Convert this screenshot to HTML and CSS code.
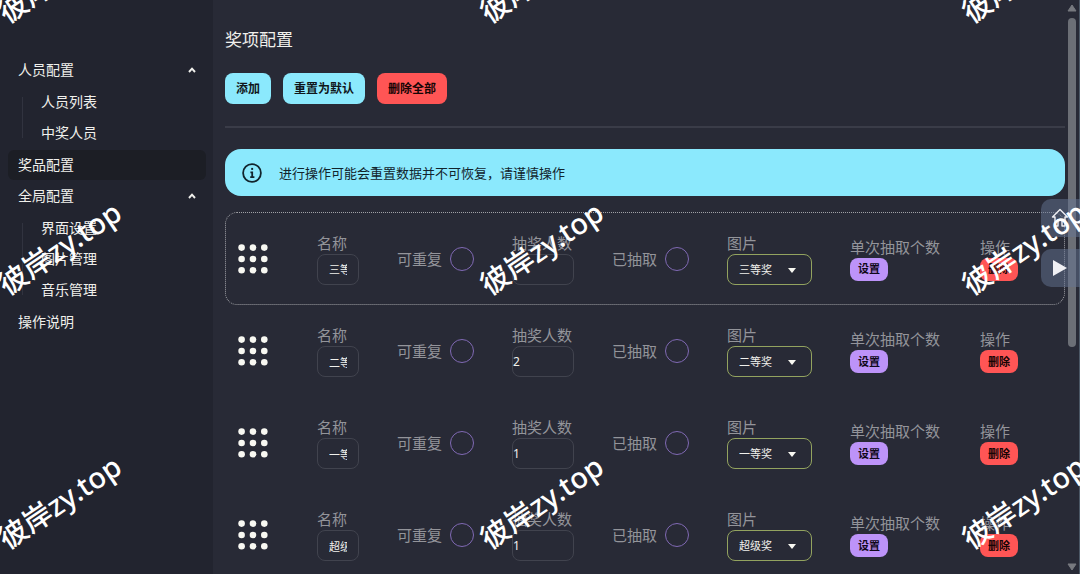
FILE: index.html
```html
<!DOCTYPE html>
<html lang="zh-CN">
<head>
<meta charset="utf-8">
<title>奖项配置</title>
<link rel="stylesheet" href="styles.css">
</head>
<body>
<svg class="defs" aria-hidden="true">
  <symbol id="grip" viewBox="0 0 30 30">
    <circle cx="3.6" cy="3.6" r="3.3"/><circle cx="15" cy="3.6" r="3.3"/><circle cx="26.3" cy="3.6" r="3.3"/>
    <circle cx="3.6" cy="15" r="3.3"/><circle cx="15" cy="15" r="3.3"/><circle cx="26.3" cy="15" r="3.3"/>
    <circle cx="3.6" cy="26.3" r="3.3"/><circle cx="15" cy="26.3" r="3.3"/><circle cx="26.3" cy="26.3" r="3.3"/>
  </symbol>
  <symbol id="chevron" viewBox="0 0 8 6"><path d="M1 5 4 1.6 7 5" fill="none" stroke="currentColor" stroke-width="1.9"/></symbol>
</svg>
<div class="app">
  <nav class="sidebar">
    <ul class="menu">
      <li class="group">
        <button class="item" type="button">人员配置<svg class="chevron"><use href="#chevron"/></svg></button>
        <ul class="submenu">
          <li><a class="item" href="#persons">人员列表</a></li>
          <li><a class="item" href="#winners">中奖人员</a></li>
        </ul>
      </li>
      <li><a class="item active" href="#prizes">奖品配置</a></li>
      <li class="group">
        <button class="item" type="button">全局配置<svg class="chevron"><use href="#chevron"/></svg></button>
        <ul class="submenu">
          <li><a class="item" href="#face">界面设置</a></li>
          <li><a class="item" href="#images">图片管理</a></li>
          <li><a class="item" href="#music">音乐管理</a></li>
        </ul>
      </li>
      <li><a class="item" href="#readme">操作说明</a></li>
    </ul>
  </nav>

  <main class="main">
    <h1 class="title">奖项配置</h1>
    <div class="actions">
      <button class="btn info" type="button">添加</button>
      <button class="btn info" type="button">重置为默认</button>
      <button class="btn error" type="button">删除全部</button>
    </div>
    <hr class="divider">
    <div class="alert" role="alert">
      <svg class="alert-icon" viewBox="0 0 20 20" fill="none" stroke="currentColor" stroke-width="1.8">
        <circle cx="10" cy="10" r="8.9"/>
        <path d="M8.4 9.3h1.8v4.8M8.2 14.1h4.2"/><path d="M9.2 5.9h1.9" stroke-width="2"/>
      </svg>
      <span>进行操作可能会重置数据并不可恢复，请谨慎操作</span>
    </div>

    <ul class="prizes">
      <li class="prize selected">
        <svg class="grip"><use href="#grip"/></svg>
        <label class="field name">名称<input class="input" type="text" value="三等奖"></label>
        <label class="check">可重复<input type="checkbox"></label>
        <label class="field count">抽奖人数<input class="input" type="text" value=""></label>
        <label class="check">已抽取<input type="checkbox"></label>
        <label class="field image">图片<select class="select"><option>三等奖</option></select></label>
        <div class="field single"><span>单次抽取个数</span><button class="btn small accent" type="button">设置</button></div>
        <div class="field"><span>操作</span><button class="btn small error" type="button">删除</button></div>
      </li>
      <li class="prize">
        <svg class="grip"><use href="#grip"/></svg>
        <label class="field name">名称<input class="input" type="text" value="二等奖"></label>
        <label class="check">可重复<input type="checkbox"></label>
        <label class="field count">抽奖人数<input class="input" type="text" value="2"></label>
        <label class="check">已抽取<input type="checkbox"></label>
        <label class="field image">图片<select class="select"><option>二等奖</option></select></label>
        <div class="field single"><span>单次抽取个数</span><button class="btn small accent" type="button">设置</button></div>
        <div class="field"><span>操作</span><button class="btn small error" type="button">删除</button></div>
      </li>
      <li class="prize">
        <svg class="grip"><use href="#grip"/></svg>
        <label class="field name">名称<input class="input" type="text" value="一等奖"></label>
        <label class="check">可重复<input type="checkbox"></label>
        <label class="field count">抽奖人数<input class="input" type="text" value="1"></label>
        <label class="check">已抽取<input type="checkbox"></label>
        <label class="field image">图片<select class="select"><option>一等奖</option></select></label>
        <div class="field single"><span>单次抽取个数</span><button class="btn small accent" type="button">设置</button></div>
        <div class="field"><span>操作</span><button class="btn small error" type="button">删除</button></div>
      </li>
      <li class="prize">
        <svg class="grip"><use href="#grip"/></svg>
        <label class="field name">名称<input class="input" type="text" value="超级奖"></label>
        <label class="check">可重复<input type="checkbox"></label>
        <label class="field count">抽奖人数<input class="input" type="text" value="1"></label>
        <label class="check">已抽取<input type="checkbox"></label>
        <label class="field image">图片<select class="select"><option>超级奖</option></select></label>
        <div class="field single"><span>单次抽取个数</span><button class="btn small accent" type="button">设置</button></div>
        <div class="field"><span>操作</span><button class="btn small error" type="button">删除</button></div>
      </li>
    </ul>
  </main>

  <div class="scrollbar" aria-hidden="true">
    <svg class="arrow" viewBox="0 0 10 8"><path d="M5 1 9 7H1z" stroke-linejoin="round"/></svg>
    <div class="track"><div class="thumb"></div></div>
    <svg class="arrow" viewBox="0 0 10 8"><path d="M5 7 9 1H1z" stroke-linejoin="round"/></svg>
  </div>

  <div class="dock">
    <button class="dock-btn" type="button" aria-label="首页">
      <svg viewBox="0 0 20 20" width="20" height="20" fill="none" stroke="currentColor" stroke-width="1.4" stroke-linejoin="round"><path d="M2.5 9 10 1.5 17.500 9H15v9h-3v-6H8v6H5V9z"/></svg>
    </button>
    <button class="dock-btn" type="button" aria-label="播放">
      <svg viewBox="0 0 20 20" width="20" height="20" fill="currentColor"><path d="M3 2v16l14-8z"/></svg>
    </button>
  </div>

  <div class="marks" aria-hidden="true">
    <span>彼岸zy.top</span><span>彼岸zy.top</span><span>彼岸zy.top</span>
    <span>彼岸zy.top</span><span>彼岸zy.top</span><span>彼岸zy.top</span>
    <span>彼岸zy.top</span><span>彼岸zy.top</span><span>彼岸zy.top</span>
  </div>
</div>
</body>
</html>
```
FILE: styles.css
```css
* { box-sizing: border-box; }
body {
  margin: 0;
  background: #282a36;
  color: #f0f0ec;
  font: 14px/20px "Noto Sans", "Noto Sans CJK SC", sans-serif;
}
button, input, select { font: inherit; color: inherit; margin: 0; }
ul { list-style: none; margin: 0; padding: 0; }
.defs { display: none; }

.app {
  position: relative;
  display: grid;
  grid-template-columns: 213px minmax(0, 1fr) 15px;
  grid-template-rows: minmax(0, 1fr);
  height: 100vh;
  overflow: hidden;
}

/* Sidebar */
.sidebar { background: #22242f; padding: 55px 7px 0 8px; }
.menu, .submenu { display: flex; flex-direction: column; gap: 1px; }
.submenu {
  position: relative;
  margin: 2px 0 1px 14px;
  padding-left: 9px;
}
.submenu::before {
  content: "";
  position: absolute;
  left: 0;
  top: 10px;
  bottom: 10px;
  width: 1px;
  background: #31333f;
}
.item {
  display: flex;
  align-items: center;
  justify-content: space-between;
  width: 100%;
  height: 30px;
  padding: 0 10px;
  border: 0;
  border-radius: 6px;
  background: none;
  text-decoration: none;
  color: inherit;
}
.item.active { background: #1c1e25; }
.chevron { width: 8px; height: 6px; }

/* Content */
.main { padding: 27px 0 0 12px; }
.title { margin: 0; font-size: 17px; line-height: 26px; font-weight: 400; }
.actions { display: flex; gap: 12px; margin-top: 20px; }
.btn {
  height: 31px;
  padding: 0 11px;
  border: 0;
  border-radius: 8px;
  font-size: 12px;
  line-height: 20px;
  font-weight: 700;
  color: #10161b;
}
.btn.info { background: #8be9fd; }
.btn.error { background: #ff5555; color: #160505; }
.btn.accent { background: #bd93f9; color: #10091a; }
.btn.small { height: 23px; padding: 0 8px; font-size: 11px; }
.divider { margin: 22px 0 21px; border: 0; height: 2px; background: #3a3c48; }
.alert {
  display: flex;
  align-items: center;
  gap: 17px;
  height: 47px;
  padding: 0 17px;
  border-radius: 16px;
  background: #8be9fd;
  color: #12242c;
  font-size: 13px;
}
.alert-icon { width: 20px; height: 20px; }

.prizes { margin-top: 16px; }
.prize {
  display: flex;
  align-items: center;
  gap: 38px;
  height: 92px;
  padding: 0 12px;
  border: 1px solid transparent;
  border-radius: 12px;
}
.prize.selected { height: 93px; border: 1px dotted #a0a1a6; }
.grip { width: 30px; height: 30px; margin-right: 11px; fill: #f8f8f2; }
.field {
  display: flex;
  flex-direction: column;
  align-items: flex-start;
  font-size: 15px;
  line-height: 21px;
  color: #93949a;
}
.name { width: 42px; }
.count { width: 62px; }
.image { width: 85px; }
.single { width: 92px; }
.input, .select {
  width: 100%;
  height: 31px;
  border: 1px solid #41434e;
  border-radius: 8px;
  background: transparent;
  font-size: 11px;
  color: #f0f0ec;
}
.input { padding: 0 11px; }
.count .input { padding: 0; font-size: 12px; }
.select {
  appearance: none;
  padding: 0 11px;
  border-color: #93a35f;
}
.image { position: relative; }
.image::after {
  content: "";
  position: absolute;
  right: 16px;
  bottom: 12px;
  border: 4px solid transparent;
  border-top: 5px solid #f8f8f2;
  border-bottom: 0;
}
.check {
  display: flex;
  align-items: center;
  justify-content: space-between;
  width: 77px;
  font-size: 15px;
  color: #93949a;
}
.check input {
  appearance: none;
  width: 24px;
  height: 24px;
  border: 1px solid #8069b4;
  border-radius: 50%;
}

/* Scrollbar */
.scrollbar {
  display: flex;
  flex-direction: column;
  align-items: center;
  gap: 6px;
  padding: 4px 0 3px;
  border-right: 1px solid #4c5866;
  fill: #77797f;
}
.arrow { width: 10px; height: 8px; stroke: #77797f; }
.track { flex: 1; }
.thumb { width: 8px; height: 61%; border-radius: 4px; background: #6c6f76; }

/* Floating controls */
.dock {
  position: absolute;
  right: 0;
  top: 199px;
  display: flex;
  flex-direction: column;
  gap: 12px;
}
.dock-btn {
  display: flex;
  align-items: center;
  width: 39px;
  height: 38px;
  padding: 0 9px;
  border: 0;
  border-radius: 10px 0 0 10px;
  background: rgba(100, 116, 146, 0.5);
  color: #f0f0f4;
}

/* Watermark tiles */
.marks {
  position: absolute;
  left: -11px;
  top: -42px;
  display: grid;
  grid-template-columns: repeat(3, 482px);
  grid-template-rows: 272px 254px 254px;
  pointer-events: none;
}
.marks span {
  justify-self: start;
  align-self: start;
  font: 500 29px/36px "Noto Sans", "Noto Sans CJK SC", sans-serif;
  color: #ffffff;
  transform: rotate(-34deg);
}
```
